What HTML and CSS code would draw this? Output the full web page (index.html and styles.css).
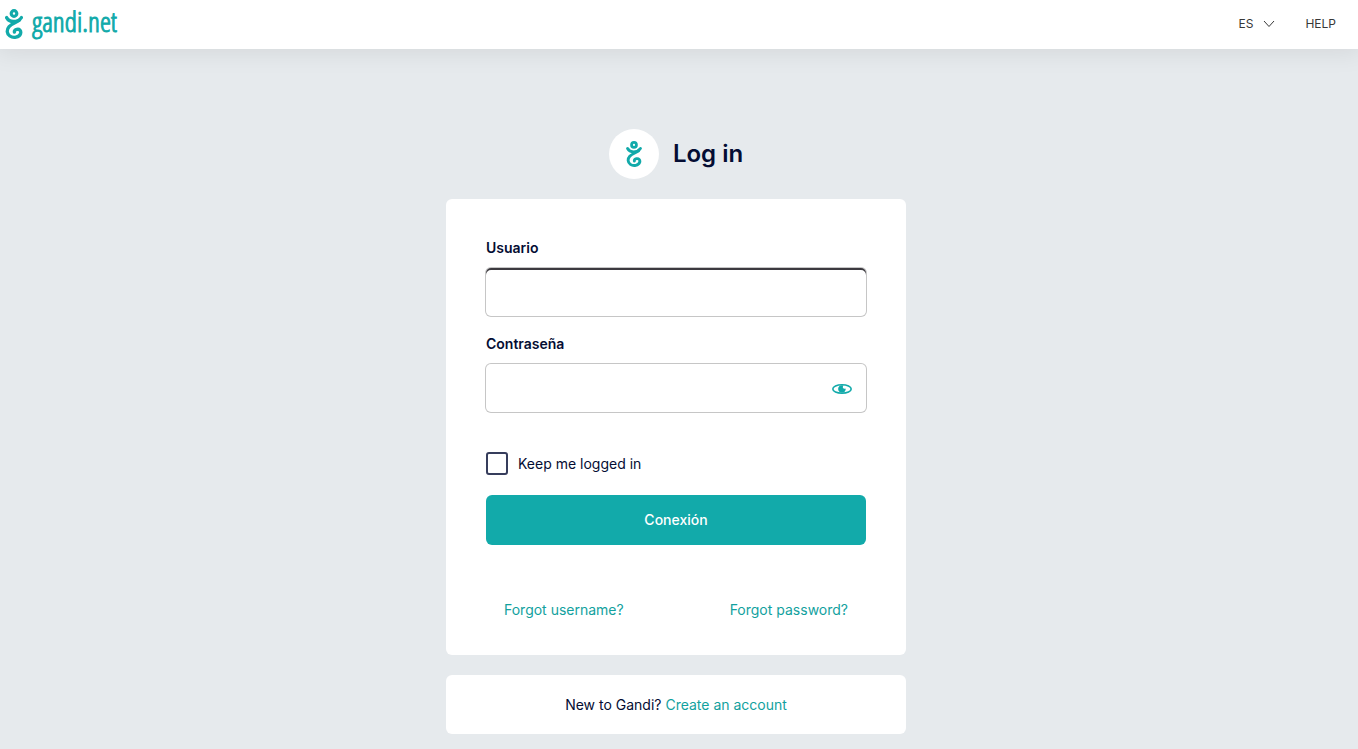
FILE: index.html
```html
<!DOCTYPE html>
<html lang="es">
<head>
    <meta charset="UTF-8">
    <meta name="viewport" content="width=device-width, initial-scale=1.0">
    <title>Log in - Gandi.net</title>
    <link rel="stylesheet" href="styles.css">
</head>
<body>
    <!-- Gandi figure, used in the header and next to the title -->
    <svg class="symbols" aria-hidden="true">
        <symbol id="gandi" viewBox="0 0 18 30">
            <circle cx="9" cy="4.5" r="2.8" stroke-width="3.2"/>
            <path d="M1.6 8.6C3 11.2 5.4 12.4 8.4 12.5C11.8 12.5 14.6 11.2 16.4 8.6" stroke-width="3.3"/>
            <path d="M14.4 11.2C10.6 13.8 6.6 14.8 4.1 17.6C1.3 20.8 1.8 25 4.8 27C8.4 29.4 14.3 28.4 15.6 24.6C16.4 21.8 14.3 19.8 11.9 20.4C10.2 20.8 9.2 22 9.4 23.2" stroke-width="3.3"/>
        </symbol>
    </svg>

    <header class="header">
        <a class="brand" href="#">
            <svg class="brand-icon" aria-hidden="true"><use href="#gandi"/></svg>
            <span class="brand-name">gandi.net</span>
        </a>
        <nav class="nav">
            <button class="language" type="button">
                ES
                <svg class="chevron" viewBox="0 0 12 8" aria-hidden="true"><path d="M1 1l5 5.5L11 1"/></svg>
            </button>
            <a class="help" href="#">HELP</a>
        </nav>
    </header>

    <main class="main">
        <div class="title">
            <span class="title-logo">
                <svg class="title-icon" aria-hidden="true"><use href="#gandi"/></svg>
            </span>
            <h1>Log in</h1>
        </div>

        <form class="card login">
            <label class="label" for="username">Usuario</label>
            <input class="input input-active" id="username" type="text">

            <label class="label" for="password">Contraseña</label>
            <div class="password">
                <input class="input" id="password" type="password">
                <button class="reveal" type="button" aria-label="Mostrar contraseña">
                    <svg class="eye" viewBox="0 0 20 10" aria-hidden="true">
                        <ellipse cx="10" cy="5" rx="9.2" ry="4.2"/>
                        <path d="M10 1.2a3.8 3.8 0 1 0 3.7 3.4c-1 .4-2.3.2-2.7-.6-.3-.8-.2-2 .5-2.5z"/>
                    </svg>
                </button>
            </div>

            <div class="remember">
                <input class="checkbox" id="remember" type="checkbox">
                <label for="remember">Keep me logged in</label>
            </div>

            <button class="submit" type="submit">Conexión</button>

            <div class="links">
                <a href="#">Forgot username?</a>
                <a href="#">Forgot password?</a>
            </div>
        </form>

        <div class="card signup">
            New to Gandi? <a href="#">Create an account</a>
        </div>
    </main>
</body>
</html>
```
FILE: styles.css
```css
* {
    box-sizing: border-box;
}
body {
    margin: 0;
    font-family: Inter, "Liberation Sans", sans-serif;
    font-size: 14px;
    line-height: 20px;
    color: #040d33;
    background-color: #e6eaed;
}
a {
    color: #12a19e;
    text-decoration: none;
}
button {
    padding: 0;
    border: 0;
    background: none;
    font: inherit;
    cursor: pointer;
}
.symbols {
    display: none;
}

/* Header */
.header {
    display: flex;
    align-items: center;
    justify-content: space-between;
    height: 49px;
    padding: 0 22px 1px 5px;
    background-color: #fff;
    box-shadow: 0 0 24px 4px rgba(0, 0, 0, 0.08);
}
.brand {
    display: flex;
    align-items: center;
    gap: 9px;
    color: #12aaaa;
}
.brand-icon, .title-icon {
    fill: none;
    stroke: #12aaaa;
    stroke-linecap: round;
}
.brand-icon {
    width: 18px;
    height: 30px;
}
.brand-name {
    padding-bottom: 6px;
    font-family: "Open Sans Condensed Light", "Open Sans Condensed", "DejaVu Sans Condensed", sans-serif;
    font-size: 28px;
    font-weight: 300;
    -webkit-text-stroke: 1px #12aaaa;
}
.nav {
    display: flex;
    align-items: center;
    gap: 30px;
    font-size: 12px;
}
.language {
    display: flex;
    align-items: center;
    gap: 10px;
    color: #383838;
}
.chevron {
    width: 12px;
    height: 8px;
    fill: none;
    stroke: #383838;
}
.help {
    color: #383838;
}

/* Page content */
.main {
    display: flex;
    flex-direction: column;
    align-items: center;
    gap: 20px;
    padding: 80px 6px 15px 0;
}
.title {
    display: flex;
    align-items: center;
    gap: 14px;
}
.title h1 {
    margin: 0;
    font-size: 24px;
    font-weight: 600;
}
.title-logo {
    display: flex;
    align-items: center;
    justify-content: center;
    width: 50px;
    height: 50px;
    border-radius: 50%;
    background-color: #fff;
}
.title-icon {
    width: 16px;
    height: 26px;
}
.card {
    width: 100%;
    max-width: 460px;
    border-radius: 6px;
    background-color: #fff;
}

/* Login form */
.login {
    display: flex;
    flex-direction: column;
    padding: 39px 40px 35px;
}
.label {
    margin-bottom: 10px;
    font-weight: 600;
}
.input {
    width: 100%;
    height: 48px;
    padding: 0 16px;
    border: 0;
    border-radius: 5px;
    outline: none;
    background-color: #fff;
    box-shadow: 0 0 0 1px #c6c6c6;
    font: inherit;
    color: inherit;
}
.input-active {
    margin-bottom: 18px;
    box-shadow: inset 0 2px 0 #3c3a3f, 0 0 0 1px #c6c6c6;
}
.password {
    position: relative;
    margin-bottom: 40px;
}
.reveal {
    position: absolute;
    top: 0;
    right: 0;
    display: flex;
    align-items: center;
    height: 100%;
    padding: 2px 14px 0;
}
.eye {
    width: 20px;
    height: 10px;
    fill: #12aaaa;
}
.eye ellipse {
    fill: none;
    stroke: #12aaaa;
    stroke-width: 1.6;
}
.remember {
    display: flex;
    align-items: center;
    gap: 10px;
    margin-bottom: 20px;
}
.checkbox {
    appearance: none;
    width: 22px;
    height: 23px;
    margin: 0;
    border: 2px solid #363d5c;
    border-radius: 3px;
    background-color: #fff;
}
.checkbox:checked {
    background-color: #12aaaa;
}
.submit {
    height: 50px;
    margin-bottom: 55px;
    border-radius: 6px;
    background-color: #12aaaa;
    color: #fff;
    font-weight: 500;
}
.links {
    display: flex;
    justify-content: space-between;
    padding: 0 18px;
}
.signup {
    padding: 20px 40px 19px;
    text-align: center;
}
```
